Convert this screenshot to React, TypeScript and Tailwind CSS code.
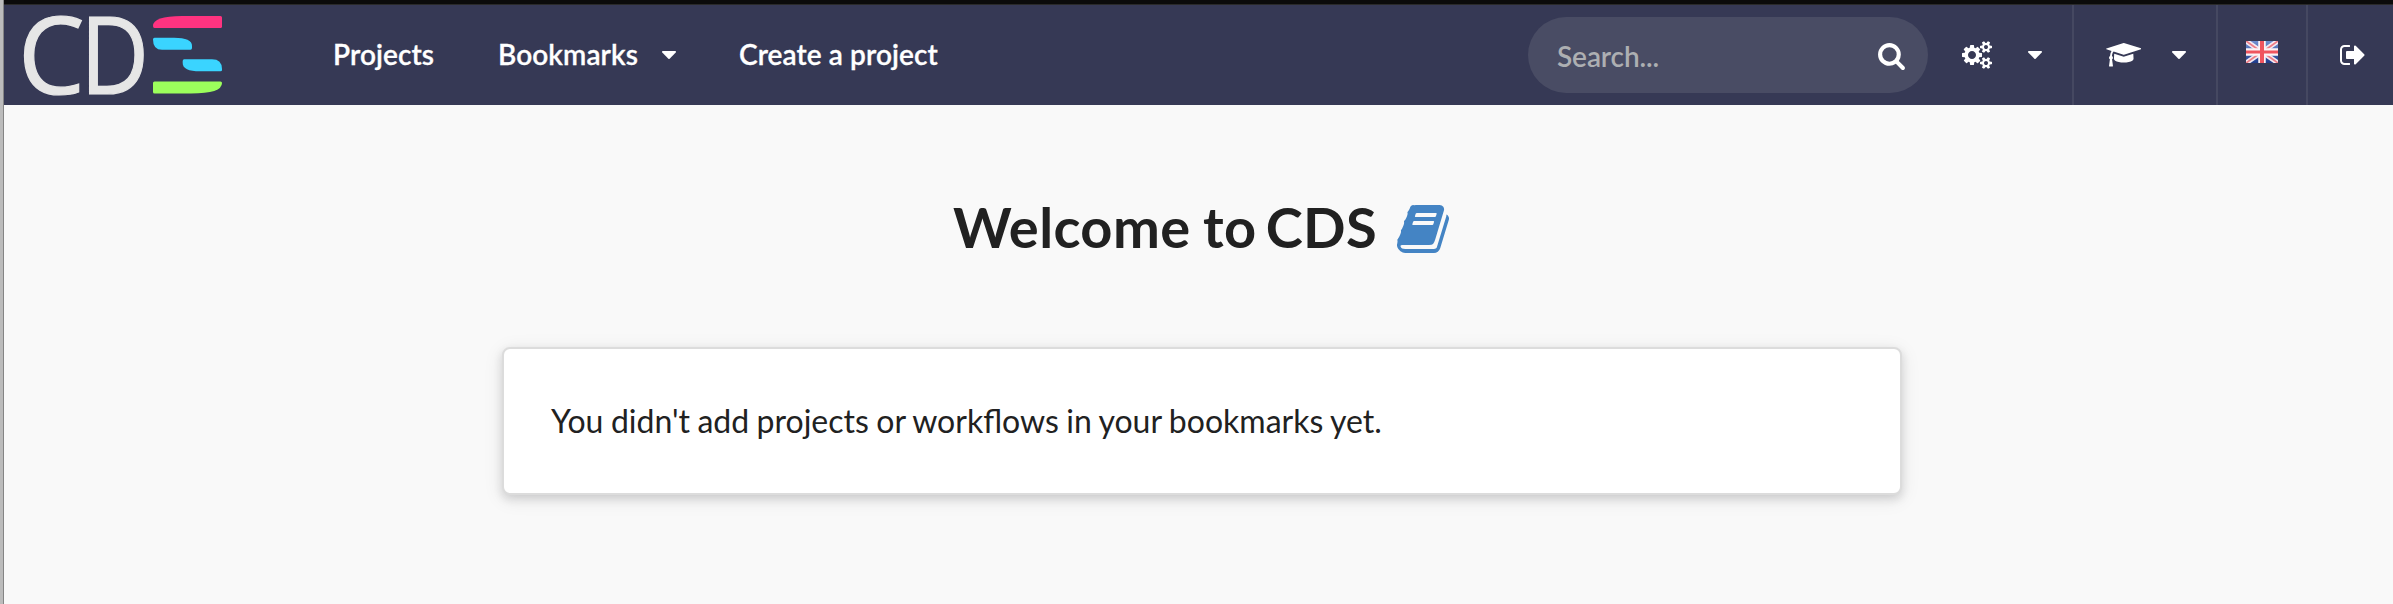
import type { ReactNode } from "react";

const SMALL_GEAR =
  "v140q0 16-149 31-12 27-30 52 51 113 51 138 0 4-4 7-122 71-124 71-8 0-46-47t-52-68q-20 2-30 2t-30-2q-14 21-52 68t-46 47q-2 0-124-71-4-3-4-7 0-25 51-138-18-25-30-52-149-15-149-31v-140q0-16 149-31 13-29 30-52-51-113-51-138 0-4 4-7 4-2 35-20t59-34 30-16q8 0 46 46.5t52 67.5q20-2 30-2t30 2q51-71 92-112l6-2q4 0 124 70 4 3 4 7 0 25-51 138 17 23 30 52 149 15 149 31z";

const icons = {
  book: "M1639 478q40 57 18 129l-275 906q-19 64-76.5 107.5t-122.5 43.5h-923q-77 0-148.5-53.5t-99.5-131.5q-24-67-2-127 0-4 3-27t4-37q1-8-3-21.5t-3-19.5q2-11 8-21t16.5-23.5 16.5-23.5q23-38 45-91.5t30-91.5q3-10 .5-30t-.5-28q3-11 17-28t17-23q21-36 42-92t25-90q1-9-2.5-32t.5-28q4-13 22-30.5t22-22.5q19-26 42.5-84.5t27.5-96.5q1-8-3-25.5t-2-26.5q2-8 9-18t18-23 17-21q8-12 16.5-30.5t15-35 16-36 19.5-32 26.5-23.5 36-11.5 47.5 5.5l-1 3q38-9 51-9h761q74 0 114 56t18 130l-274 906q-36 119-71.5 153.5t-128.5 34.5h-869q-27 0-38 15-11 16-1 43 24 70 144 70h923q29 0 56-15.5t35-41.5l300-987q7-22 5-57 38 15 59 43zm-1064 2q-4 13 2 22.5t20 9.5h608q13 0 25.5-9.5t16.5-22.5l21-64q4-13-2-22.5t-20-9.5h-608q-13 0-25.5 9.5t-16.5 22.5zm-83 256q-4 13 2 22.5t20 9.5h608q13 0 25.5-9.5t16.5-22.5l21-64q4-13-2-22.5t-20-9.5h-608q-13 0-25.5 9.5t-16.5 22.5z",
  cogs:
    "M896 896q0-106-75-181t-181-75-181 75-75 181 75 181 181 75 181-75 75-181zm768 512q0-52-38-90t-90-38-90 38-38 90q0 53 37.5 90.5t90.5 37.5 90.5-37.5 37.5-90.5zm0-1024q0-52-38-90t-90-38-90 38-38 90q0 53 37.5 90.5t90.5 37.5 90.5-37.5 37.5-90.5zm-384 421v185q0 10-7 19.5t-16 10.5l-155 24q-11 35-32 76 34 48 90 115 7 11 7 20 0 12-7 19-23 30-82.5 89.5t-78.5 59.5q-11 0-21-7l-115-90q-37 19-77 31-11 108-23 155-7 24-30 24h-186q-11 0-20-7.5t-10-17.5l-23-153q-34-10-75-31l-118 89q-7 7-20 7-11 0-21-8-144-133-144-160 0-9 7-19 10-14 41-53t47-61q-23-44-35-82l-152-24q-10-1-17-9.5t-7-19.5v-185q0-10 7-19.5t16-10.5l155-24q11-35 32-76-34-48-90-115-7-11-7-20 0-12 7-20 22-30 82-89t79-59q11 0 21 7l115 90q34-18 77-32 11-108 23-154 7-24 30-24h186q11 0 20 7.5t10 17.5l23 153q34 10 75 31l118-89q8-7 20-7 11 0 21 8 144 133 144 160 0 8-7 19-12 16-42 54t-45 60q23 48 34 82l152 23q10 2 17 10.5t7 19.5z" +
    "M1920 1338" + SMALL_GEAR + "M1920 314" + SMALL_GEAR,
  cap: "M1774 836l18 316q4 69-82 128t-235 93.5-323 34.5-323-34.5-235-93.5-82-128l18-316 574 181q22 7 48 7t48-7zm530-324q0 23-22 31l-1120 352q-4 1-10 1t-10-1l-652-206q-43 34-71 111.5t-34 178.5q63 36 63 109 0 69-58 107l58 433q2 14-8 25-9 11-24 11h-192q-15 0-24-11-10-11-8-25l58-433q-58-38-58-107 0-73 65-111 11-207 98-330l-333-104q-22-8-22-31t22-31l1120-352q4-1 10-1t10 1l1120 352q22 8 22 31z",
  signOut:
    "M704 1440q0 4 1 20t.5 26.5-3 23.5-10 19.5-20.5 6.5h-320q-119 0-203.5-84.5t-84.5-203.5v-704q0-119 84.5-203.5t203.5-84.5h320q13 0 22.5 9.5t9.5 22.5q0 4 1 20t.5 26.5-3 23.5-10 19.5-20.5 6.5h-320q-66 0-113 47t-47 113v704q0 66 47 113t113 47h312l11.5 1 11.5 3 8 5.5 7 9 2 13.5zm928-544q0 26-19 45l-544 544q-19 19-45 19t-45-19-19-45v-288h-448q-26 0-45-19t-19-45v-384q0-26 19-45t45-19h448v-288q0-26 19-45t45-19 45 19l544 544q19 19 19 45z",
  search:
    "M1216 832q0-185-131.5-316.5t-316.5-131.5-316.5 131.5-131.5 316.5 131.5 316.5 316.5 131.5 316.5-131.5 131.5-316.5zm512 832q0 52-38 90t-90 38q-54 0-90-38l-343-342q-179 124-399 124-143 0-273.5-55.5t-225-150-150-225-55.5-273.5 55.5-273.5 150-225 225-150 273.5-55.5 273.5 55.5 225 150 150 225 55.5 273.5q0 220-124 399l343 343q37 37 37 90z",
};

function Icon({ name, width = 1792, className }: { name: keyof typeof icons; width?: number; className: string }) {
  return (
    <svg viewBox={`0 0 ${width} 1792`} className={`block shrink-0 fill-current ${className}`} aria-hidden="true">
      <path d={icons[name]} />
    </svg>
  );
}

function Caret({ className = "" }: { className?: string }) {
  return (
    <svg viewBox="384 640 1024 576" className={`block h-2 w-3.5 shrink-0 fill-current ${className}`} aria-hidden="true">
      <path d="M1408 704q0 26-19 45l-448 448q-19 19-45 19t-45-19l-448-448q-19-19-19-45t19-45 45-19h896q26 0 45 19t19 45z" />
    </svg>
  );
}

function Logo() {
  return (
    <svg viewBox="0 0 250 100" className="block h-[100px] w-[250px] shrink-0 overflow-visible" role="img" aria-label="CDS">
      <g fill="#e6e6e6" stroke="#e6e6e6" strokeWidth="1.2" fontFamily="'Open Sans', sans-serif" fontWeight="400" fontSize="108">
        <text transform="translate(14 88.5) scale(0.98 1)">C</text>
        <text transform="translate(76.2 88.5) scale(0.878 1)">D</text>
      </g>
      <path fill="#ff3380" d="M149 21Q149 11 178 11H216.500Q218 11 218 12.500V21.500Q218 23 216.500 23H150.500Q149 23 149 21Z" />
      <path fill="#3ad4ff" d="M149 34.500Q149 32.800 150.500 32.800H170Q188 32.800 188 41V43Q188 44.800 186.500 44.800H158Q149 44.800 149 34.500Z" />
      <path fill="#3ad4ff" d="M178.700 56Q178.700 54.200 180.200 54.200H208Q218 54.200 218 64V65Q218 66.300 216.500 66.300H196Q178.700 66.300 178.700 58Z" />
      <path fill="#9cff5c" d="M149 78Q149 76.400 150.500 76.400H216.500Q218 76.400 218 78Q218 88.500 187 88.500H150.500Q149 88.500 149 87Z" />
    </svg>
  );
}

function UkFlag() {
  return (
    <svg viewBox="0 0 32 22" className="block h-[22px] w-8 shrink-0" aria-hidden="true">
      <defs>
        <linearGradient id="flagBlue" x1="0" y1="0" x2="0" y2="1">
          <stop offset="0" stopColor="#6f8fd0" />
          <stop offset="1" stopColor="#1f3c8c" />
        </linearGradient>
      </defs>
      <rect width="32" height="22" fill="url(#flagBlue)" />
      <path d="M0 0L32 22M32 0L0 22" stroke="#f3e9f1" strokeWidth="5" />
      <path d="M0 0L12 8.500M32 0L20 8.500M0 22L12 13.500M32 22L20 13.500" stroke="#ee7d86" strokeWidth="1.800" />
      <path d="M16 0V22M0 11H32" stroke="#fbf3f6" strokeWidth="7.500" />
      <path d="M16 0V22" stroke="#f0555f" strokeWidth="4" />
      <path d="M0 11H32" stroke="#f0555f" strokeWidth="3" />
    </svg>
  );
}

function Cell({ className, children }: { className: string; children: ReactNode }) {
  return <div className={`flex h-full shrink-0 items-center border-l-2 border-[#454861] ${className}`}>{children}</div>;
}

export default function App() {
  return (
    <div className="flex h-[604px] w-[2393px] overflow-hidden bg-[#f9f9f9] font-['Lato',sans-serif] text-[#212121]">
      <div className="w-1 shrink-0 border-r border-[#858585] bg-[#bcbcbc]" />
      <div className="flex min-w-0 flex-1 flex-col">
        <div className="h-[5px] shrink-0 border-b border-[#2a2a2a] bg-[#0b0b0b]" />
        <header className="flex h-[100px] shrink-0 items-center bg-[#363955] text-[28px] leading-none text-white">
          <Logo />
          <nav className="flex flex-1 items-center font-semibold tracking-[0.1px] [-webkit-text-stroke:0.3px_#fff]">
            <a className="ml-[79px] w-[165px] shrink-0 pb-0.5 whitespace-nowrap">Projects</a>
            <a className="flex w-[241px] shrink-0 items-center whitespace-nowrap">
              <span className="w-[163.5px] pb-0.5">Bookmarks</span>
              <Caret />
            </a>
            <a className="shrink-0 pb-0.5 whitespace-nowrap">Create a project</a>
          </nav>
          <div className="flex h-[76px] w-[400px] shrink-0 items-center justify-between rounded-full bg-[#494c64] pr-[22.5px] pl-[29px]">
            <span className="pt-0.5 font-semibold tracking-[-0.1px] text-[#adafb2]">Search...</span>
            <Icon name="search" className="h-[29px] w-[29px]" />
          </div>
          <div className="flex h-full w-[144px] shrink-0 items-center pl-[34px]">
            <Icon name="cogs" width={1920} className="h-7 w-[30px]" />
            <Caret className="ml-[35.5px]" />
          </div>
          <Cell className="w-[144px] pl-[31.5px]">
            <Icon name="cap" width={2304} className="h-[27.5px] w-[35.5px]" />
            <Caret className="ml-[31px]" />
          </Cell>
          <Cell className="w-[90px] pb-[6px] pl-7">
            <UkFlag />
          </Cell>
          <Cell className="w-[87px] pl-[31px]">
            <Icon name="signOut" className="h-7 w-7" />
          </Cell>
        </header>
        <main className="flex flex-1 flex-col">
          <h1 className="mt-[90px] flex h-[68px] items-center pl-[949px] text-[56px] leading-[64px] font-bold tracking-[0.4px] whitespace-nowrap">
            <span className="w-[443.5px] pb-1">
              Welcome <span className="-ml-[1.5px]">to</span> <span className="-ml-[5px]">CDS</span>
            </span>
            <Icon name="book" className="h-14 w-14 text-[#4484c4]" />
          </h1>
          <section className="mt-[84px] ml-[498px] flex h-[148px] w-[1400px] items-center rounded-lg border-2 border-[#dcdcdc] bg-white pl-[47px] text-[32px] leading-none [word-spacing:-0.75px] shadow-[0_4px_8px_rgba(34,36,38,0.15),0_4px_20px_rgba(34,36,38,0.09)]">
            <p>You didn't add projects or workflows in your bookmarks yet.</p>
          </section>
        </main>
      </div>
    </div>
  );
}
